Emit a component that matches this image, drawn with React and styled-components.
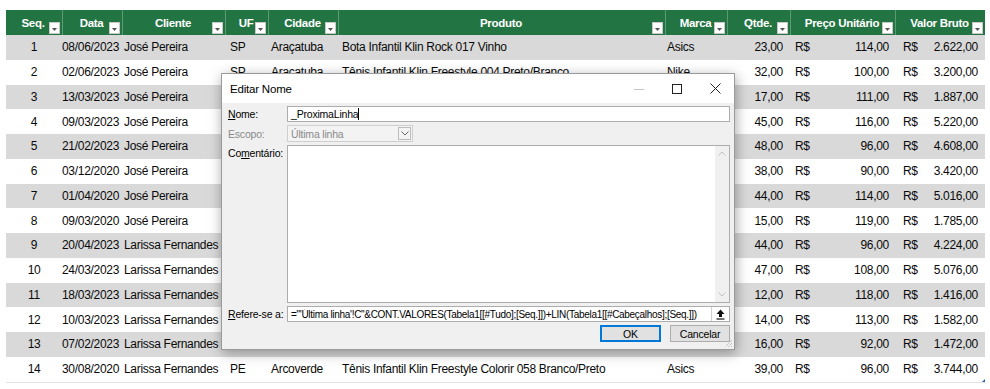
import React from "react"
import styled, { createGlobalStyle } from "styled-components"

const GlobalStyle = createGlobalStyle`
    body {
        margin: 0;
        background: #fff;
        font-family: "Liberation Sans", Arial, sans-serif;
    }
`;

const SANS = `"Liberation Sans", Arial, sans-serif`;

const COLS = "56px 60px 103px 43px 70px 327px 62px 63px 105px 90px";

const Page = styled.div`
    position: relative;
    width: 990px;
    height: 389px;
    padding: 10px 0 0 6px;
    box-sizing: border-box;
    overflow: hidden;
`;

const Table = styled.div`
    width: 979px;
    display: flex;
    flex-direction: column;
    font-family: ${SANS};
    font-size: 12px;
    letter-spacing: -0.3px;
    color: #0a0a0a;
    border-bottom: 1px solid #e4e4e4;
`;

const HeaderRow = styled.div`
    display: grid;
    grid-template-columns: ${COLS};
    height: 25px;
    background: #237443;
`;

const HeadCell = styled.div`
    position: relative;
    display: flex;
    align-items: center;
    justify-content: center;
    color: #fff;
    font-weight: bold;
    font-size: 11.5px;
    border-left: ${(p) => (p.$first ? "none" : "1px solid #5b9a72")};
    padding-right: 2px;
`;

const FilterButton = styled.span`
    position: absolute;
    right: 2px;
    bottom: 1px;
    width: 11px;
    height: 12px;
    background: #fff;
    border: 1px solid #c8c8c8;
    box-sizing: border-box;
    display: flex;
    align-items: flex-end;
    justify-content: center;
    padding-bottom: 2px;
`;

const Row = styled.div`
    display: grid;
    grid-template-columns: ${COLS};
    height: 24.75px;
    align-items: center;
    background: ${(p) => (p.$odd ? "#d9d9d9" : "#ffffff")};
`;

const Cell = styled.div`
    text-align: ${(p) => p.$align || "left"};
    padding-left: ${(p) => p.$pl || 0}px;
    padding-right: ${(p) => p.$pr || 0}px;
    white-space: nowrap;
    overflow: hidden;
`;

const MoneyCell = styled.div`
    display: flex;
    justify-content: space-between;
    padding-left: ${(p) => p.$pl}px;
    padding-right: ${(p) => p.$pr}px;
    white-space: nowrap;
`;

const TableGrip = styled.span`
    position: absolute;
    left: 982px;
    top: 379px;
    width: 0;
    height: 0;
    border-left: 3px solid transparent;
    border-bottom: 3px solid #2a5fa8;
`;

/* janela "Editar Nome" */

const Window = styled.div`
    position: absolute;
    left: 221px;
    top: 73px;
    width: 514px;
    height: 277px;
    box-sizing: border-box;
    background: #f0f0f0;
    border: 1px solid #9a9a9a;
    box-shadow: 1px 3px 12px rgba(0, 0, 0, 0.35);
    font-family: ${SANS};
    font-size: 10.5px;
    letter-spacing: -0.2px;
    color: #000;
    display: flex;
    flex-direction: column;
`;

const TitleBar = styled.div`
    height: 29px;
    background: #fff;
    display: flex;
    align-items: center;
    padding-left: 8px;
`;

const Title = styled.span`
    flex: 1;
    font-size: 11.5px;
`;

const WinButton = styled.span`
    width: 38px;
    height: 29px;
    display: flex;
    align-items: center;
    justify-content: center;
`;

const Body = styled.div`
    flex: 1;
    display: grid;
    grid-template-columns: 59px 443px;
    grid-template-rows: 16px 17px 158px 16px 17px;
    row-gap: 3px;
    padding: 3px 0 0 6px;
    align-items: center;
`;

const Label = styled.span`
    align-self: ${(p) => (p.$top ? "start" : "center")};
    padding-top: ${(p) => (p.$top ? 2 : 0)}px;
    color: ${(p) => (p.$disabled ? "#8a8a8a" : "#000")};
    white-space: nowrap;
`;

const TextBox = styled.div`
    height: 100%;
    box-sizing: border-box;
    background: #fff;
    border: 1px solid #adadad;
    display: flex;
    align-items: center;
    padding-left: 3px;
    white-space: nowrap;
    overflow: hidden;
    font-size: ${(p) => p.$size || 10.5}px;
    letter-spacing: ${(p) => p.$spacing ?? -0.2}px;
`;

const Caret = styled.span`
    display: inline-block;
    width: 1px;
    height: 12px;
    background: #000;
`;

const SelectBox = styled.div`
    width: 126px;
    height: 100%;
    box-sizing: border-box;
    border: 1px solid #cfcfcf;
    background: #f3f3f3;
    color: #8a8a8a;
    display: flex;
    align-items: center;
    padding-left: 3px;
`;

const SelectText = styled.span`
    flex: 1;
`;

const SelectArrow = styled.span`
    width: 13px;
    height: 13px;
    margin-right: 1px;
    box-sizing: border-box;
    border: 1px solid #bcbcbc;
    display: flex;
    align-items: center;
    justify-content: center;
`;

const Memo = styled.div`
    height: 100%;
    box-sizing: border-box;
    background: #fff;
    border: 1px solid #adadad;
    display: flex;
    justify-content: flex-end;
`;

const ScrollTrack = styled.div`
    width: 14px;
    background: #f0f0f0;
    display: flex;
    flex-direction: column;
    justify-content: space-between;
    align-items: center;
    padding: 5px 0;
`;

const RefBox = styled(TextBox)`
    padding-right: 0;
`;

const RefText = styled.span`
    flex: 1;
    overflow: hidden;
`;

const CollapseButton = styled.span`
    width: 17px;
    height: 100%;
    border-left: 1px solid #d0d0d0;
    display: flex;
    align-items: center;
    justify-content: center;
`;

const ButtonRow = styled.div`
    grid-column: 1 / 3;
    display: flex;
    justify-content: flex-end;
    gap: 9px;
    height: 100%;
`;

const DialogButton = styled.span`
    width: ${(p) => p.$w}px;
    height: 100%;
    box-sizing: border-box;
    background: #e1e1e1;
    border: ${(p) => (p.$default ? "2px solid #0078d7" : "1px solid #adadad")};
    display: flex;
    align-items: center;
    justify-content: center;
`;

const ResizeGrip = styled.svg`
    position: absolute;
    right: 1px;
    bottom: 1px;
`;

const rows = [
    [1, "08/06/2023", "José Pereira", "SP", "Araçatuba", "Bota Infantil Klin Rock 017 Vinho", "Asics", "23,00", "114,00", "2.622,00"],
    [2, "02/06/2023", "José Pereira", "SP", "Araçatuba", "Tênis Infantil Klin Freestyle 004 Preto/Branco", "Nike", "32,00", "100,00", "3.200,00"],
    [3, "13/03/2023", "José Pereira", "SP", "Araçatuba", "Bota Infantil Klin Rock 017 Vinho", "Asics", "17,00", "111,00", "1.887,00"],
    [4, "09/03/2023", "José Pereira", "SP", "Araçatuba", "Tênis Infantil Klin Freestyle 004 Preto/Branco", "Nike", "45,00", "116,00", "5.220,00"],
    [5, "21/02/2023", "José Pereira", "SP", "Araçatuba", "Bota Infantil Klin Rock 017 Vinho", "Asics", "48,00", "96,00", "4.608,00"],
    [6, "03/12/2020", "José Pereira", "SP", "Araçatuba", "Tênis Infantil Klin Freestyle 004 Preto/Branco", "Nike", "38,00", "90,00", "3.420,00"],
    [7, "01/04/2020", "José Pereira", "SP", "Araçatuba", "Bota Infantil Klin Rock 017 Vinho", "Asics", "44,00", "114,00", "5.016,00"],
    [8, "09/03/2020", "José Pereira", "SP", "Araçatuba", "Tênis Infantil Klin Freestyle 004 Preto/Branco", "Nike", "15,00", "119,00", "1.785,00"],
    [9, "20/04/2023", "Larissa Fernandes", "PE", "Arcoverde", "Bota Infantil Klin Rock 017 Vinho", "Asics", "44,00", "96,00", "4.224,00"],
    [10, "24/03/2023", "Larissa Fernandes", "PE", "Arcoverde", "Tênis Infantil Klin Freestyle 004 Preto/Branco", "Nike", "47,00", "108,00", "5.076,00"],
    [11, "18/03/2023", "Larissa Fernandes", "PE", "Arcoverde", "Bota Infantil Klin Rock 017 Vinho", "Asics", "12,00", "118,00", "1.416,00"],
    [12, "10/03/2023", "Larissa Fernandes", "PE", "Arcoverde", "Tênis Infantil Klin Freestyle 004 Preto/Branco", "Nike", "14,00", "113,00", "1.582,00"],
    [13, "07/02/2023", "Larissa Fernandes", "PE", "Arcoverde", "Bota Infantil Klin Rock 017 Vinho", "Asics", "16,00", "92,00", "1.472,00"],
    [14, "30/08/2020", "Larissa Fernandes", "PE", "Arcoverde", "Tênis Infantil Klin Freestyle Colorir 058 Branco/Preto", "Asics", "39,00", "96,00", "3.744,00"],
];

const headers = ["Seq.", "Data", "Cliente", "UF", "Cidade", "Produto", "Marca", "Qtde.", "Preço Unitário", "Valor Bruto"];

function FilterIcon() {
    return (
        <FilterButton>
            <svg width="5" height="3" viewBox="0 0 5 3">
                <path d="M0 0h5L2.5 3z" fill="#555" />
            </svg>
        </FilterButton>
    );
}

function Chevron({ up, color = "#777", size = 8 }) {
    return (
        <svg width={size} height={size / 2 + 1} viewBox="0 0 8 5">
            <path d={up ? "M0.5 4.5L4 1l3.5 3.5" : "M0.5 0.5L4 4l3.5-3.5"} fill="none" stroke={color} strokeWidth="1" />
        </svg>
    );
}

function DataTable() {
    return (
        <Table>
            <HeaderRow>
                {headers.map((h, i) => (
                    <HeadCell key={h} $first={i === 0}>
                        {h}
                        <FilterIcon />
                    </HeadCell>
                ))}
            </HeaderRow>
            {rows.map((r, i) => (
                <Row key={r[0]} $odd={i % 2 === 0}>
                    <Cell $align="center">{r[0]}</Cell>
                    <Cell $align="right" $pr={3}>{r[1]}</Cell>
                    <Cell $pl={2}>{r[2]}</Cell>
                    <Cell $pl={5}>{r[3]}</Cell>
                    <Cell $pl={3}>{r[4]}</Cell>
                    <Cell $pl={4}>{r[5]}</Cell>
                    <Cell $pl={2}>{r[6]}</Cell>
                    <Cell $align="right" $pr={7}>{r[7]}</Cell>
                    <MoneyCell $pl={5} $pr={6}><span>R$</span><span>{r[8]}</span></MoneyCell>
                    <MoneyCell $pl={8} $pr={7}><span>R$</span><span>{r[9]}</span></MoneyCell>
                </Row>
            ))}
        </Table>
    );
}

function EditNameDialog() {
    return (
        <Window>
            <TitleBar>
                <Title>Editar Nome</Title>
                <WinButton>
                    <svg width="10" height="10" viewBox="0 0 10 10">
                        <path d="M0 5.5h10" stroke="#c4c4c4" strokeWidth="1" />
                    </svg>
                </WinButton>
                <WinButton>
                    <svg width="10" height="10" viewBox="0 0 10 10">
                        <rect x="0.5" y="0.5" width="9" height="9" fill="none" stroke="#222" strokeWidth="1" />
                    </svg>
                </WinButton>
                <WinButton>
                    <svg width="11" height="11" viewBox="0 0 11 11">
                        <path d="M0.5 0.5l10 10M10.5 0.5l-10 10" stroke="#222" strokeWidth="1" />
                    </svg>
                </WinButton>
            </TitleBar>
            <Body>
                <Label><u>N</u>ome:</Label>
                <TextBox>_ProximaLinha<Caret /></TextBox>

                <Label $disabled>Escopo:</Label>
                <SelectBox>
                    <SelectText>Última linha</SelectText>
                    <SelectArrow><Chevron color="#666" /></SelectArrow>
                </SelectBox>

                <Label $top>Co<u>m</u>entário:</Label>
                <Memo>
                    <ScrollTrack>
                        <Chevron up color="#c2c2c2" />
                        <Chevron color="#c2c2c2" />
                    </ScrollTrack>
                </Memo>

                <Label><u>R</u>efere-se a:</Label>
                <RefBox $size={10} $spacing={-0.3}>
                    <RefText>="'Última linha'!C"&amp;CONT.VALORES(Tabela1[[#Tudo];[Seq.]])+LIN(Tabela1[[#Cabeçalhos];[Seq.]])</RefText>
                    <CollapseButton>
                        <svg width="9" height="11" viewBox="0 0 9 11">
                            <path d="M4.5 0.5L8.5 5H6v3H3V5H0.5z" fill="#111" />
                            <path d="M0.5 10h8" stroke="#111" strokeWidth="1.2" />
                        </svg>
                    </CollapseButton>
                </RefBox>

                <ButtonRow>
                    <DialogButton $w={61} $default>OK</DialogButton>
                    <DialogButton $w={60}>Cancelar</DialogButton>
                </ButtonRow>
            </Body>
            <ResizeGrip width="10" height="10" viewBox="0 0 10 10">
                <path d="M9 2L2 9M9 5L5 9M9 8L8 9" stroke="#a8a8a8" strokeWidth="1" strokeDasharray="1 1" />
            </ResizeGrip>
        </Window>
    );
}

export default function App() {
    return (
        <Page>
            <GlobalStyle />
            <DataTable />
            <TableGrip />
            <EditNameDialog />
        </Page>
    );
}
